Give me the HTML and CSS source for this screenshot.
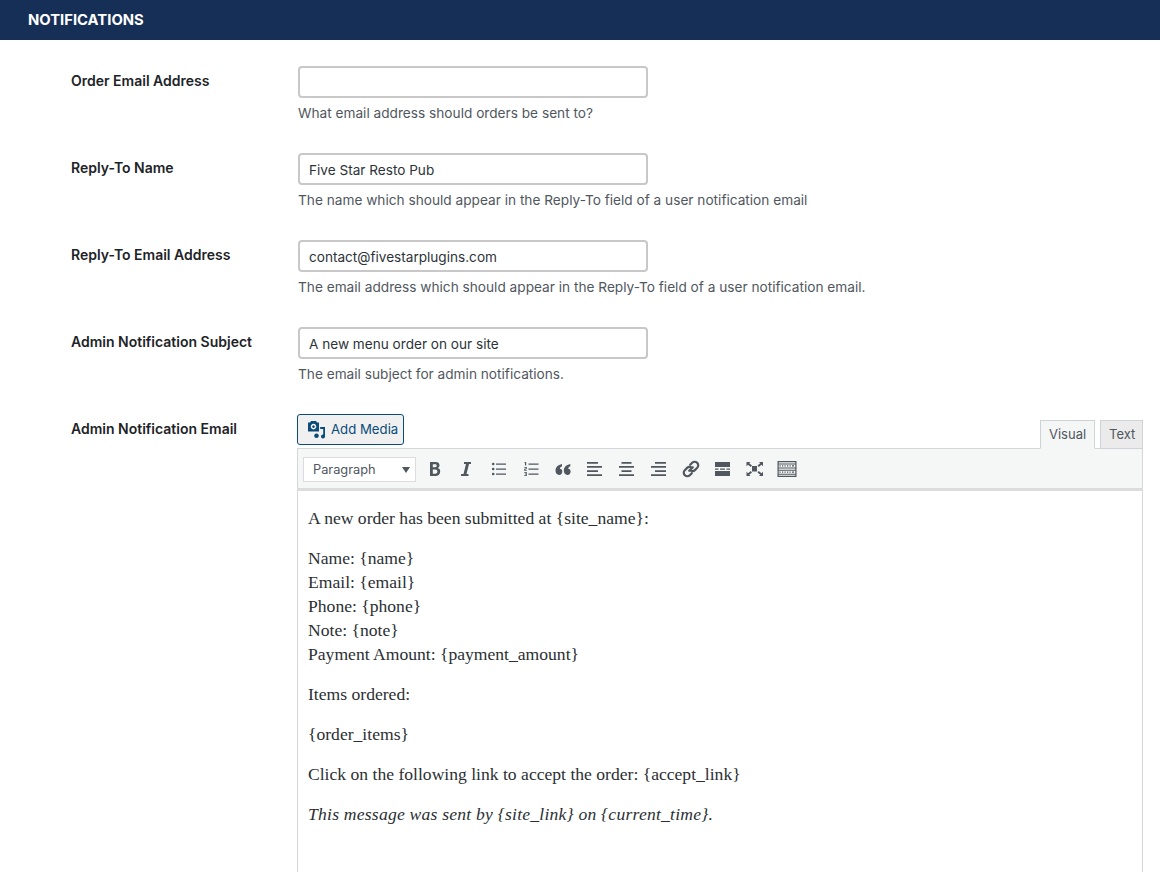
FILE: index.html
```html
<!DOCTYPE html>
<html lang="en">
<head>
<meta charset="utf-8">
<title>Notifications</title>
<link rel="stylesheet" href="styles.css">
</head>
<body>
<h2 class="section-title">Notifications</h2>
<div class="rows">
  <div class="row">
    <div class="label">Order Email Address</div>
    <div class="field">
      <input class="text-input" type="text" value="">
      <p class="desc">What email address should orders be sent to?</p>
    </div>
  </div>
  <div class="row">
    <div class="label">Reply-To Name</div>
    <div class="field">
      <input class="text-input" type="text" value="Five Star Resto Pub">
      <p class="desc">The name which should appear in the Reply-To field of a user notification email</p>
    </div>
  </div>
  <div class="row">
    <div class="label">Reply-To Email Address</div>
    <div class="field">
      <input class="text-input" type="text" value="contact@fivestarplugins.com">
      <p class="desc">The email address which should appear in the Reply-To field of a user notification email.</p>
    </div>
  </div>
  <div class="row">
    <div class="label">Admin Notification Subject</div>
    <div class="field">
      <input class="text-input" type="text" value="A new menu order on our site">
      <p class="desc">The email subject for admin notifications.</p>
    </div>
  </div>
  <div class="row row-editor">
    <div class="label">Admin Notification Email</div>
    <div class="field editor">
      <div class="editor-top">
        <button class="media-btn" type="button">
          <svg class="media-icon" viewBox="0 0 20 20" width="20" height="20"><path d="M1 2.500h2l1-1.500h5l1 1.500h2v9H1zM6.500 3.800a2.800 2.800 0 1 0 .01 0zM6.500 5.300a1.300 1.300 0 1 1-.01 0z" fill-rule="evenodd"/><path d="M18 7v9.500a2 2 0 1 1-1.800-2V9h-3V7zM9.500 13.500a2.300 2.300 0 1 1-.01 0z"/></svg>
          Add Media
        </button>
        <div class="tabs">
          <span class="tab tab-active">Visual</span>
          <span class="tab tab-text">Text</span>
        </div>
      </div>
      <div class="toolbar">
        <div class="format-select">Paragraph<span class="caret"></span></div>
        <span class="tool"><svg viewBox="0 0 20 20"><path fill-rule="evenodd" d="M5 3h5.500c2.700 0 4 1.200 4 3.300 0 1.300-.7 2.300-1.800 2.700 1.500.4 2.500 1.500 2.500 3.300 0 2.900-1.900 4.700-4.800 4.700H5zm2.800 2.300v2.900h2.200c1.100 0 1.700-.5 1.700-1.450s-.6-1.450-1.700-1.450zm0 5.200v4.200h2.500c1.300 0 2.100-.8 2.100-2.100s-.8-2.100-2.100-2.100z"/></svg></span>
        <span class="tool"><svg viewBox="0 0 20 20"><path d="M7 3h7v2h-2L9.500 15h2v2H4v-2h2.500L9 5H7z"/></svg></span>
        <span class="tool"><svg viewBox="0 0 20 20"><circle cx="4.200" cy="5" r="1.300"/><circle cx="4.200" cy="10" r="1.300"/><circle cx="4.200" cy="15" r="1.300"/><path d="M7 4.500h10v1.200H7zM7 9.500h10v1.200H7zM7 14.500h10v1.200H7z"/></svg></span>
        <span class="tool"><svg viewBox="0 0 20 20"><path d="M7.500 4.500h10v1.200h-10zM7.500 9.500h10v1.200h-10zM7.500 14.500h10v1.200h-10zM4 3h1.200v3.500H4V4h-.8zM3.200 8h2.600v2.300H4.400v.7h1.400v.8H3.200V9.700h1.500V8.800H3.200zM3.200 13h2.600v4H3.200v-.7h1.500v-1H3.800v-.6h.9v-1H3.200z"/></svg></span>
        <span class="tool"><svg viewBox="0 0 20 20"><path d="M9 5v2.300c-1.300.6-2 1.500-2.100 2.500 1.400 0 2.400 1 2.400 2.700 0 2-1.200 3.400-3.100 3.400-2.200 0-3.700-1.700-3.700-4.300C2.500 8.300 5 5.800 9 5zM17.300 5v2.300c-1.300.6-2 1.500-2.100 2.500 1.400 0 2.400 1 2.400 2.700 0 2-1.200 3.400-3.100 3.400-2.200 0-3.700-1.700-3.700-4.300 0-3.300 2.500-5.800 6.500-6.600z"/></svg></span>
        <span class="tool"><svg viewBox="0 0 20 20"><path d="M2 3h11v1.700H2zM2 7h15v1.700H2zM2 11.200h11v1.700H2zM2 15.300h15V17H2z"/></svg></span>
        <span class="tool"><svg viewBox="0 0 20 20"><path d="M4.500 3h10v1.700h-10zM2 7h15v1.700H2zM4.500 11.200h10v1.700h-10zM2 15.300h15V17H2z"/></svg></span>
        <span class="tool"><svg viewBox="0 0 20 20"><path d="M6 3h11v1.700H6zM2 7h15v1.700H2zM6 11.200h11v1.700H6zM2 15.300h15V17H2z"/></svg></span>
        <span class="tool"><svg viewBox="0 0 20 20"><path d="M8.200 11.800l3.600-3.600M9.200 5.800l2-2a3.400 3.400 0 0 1 4.900 0l.1.100a3.400 3.400 0 0 1 0 4.900l-2.300 2.300a3.400 3.400 0 0 1-3.900.6M10.800 14.200l-2 2a3.400 3.400 0 0 1-4.900 0l-.1-.1a3.400 3.400 0 0 1 0-4.900l2.300-2.300a3.400 3.400 0 0 1 3.900-.6" fill="none" stroke="currentColor" stroke-width="2.200" stroke-linecap="round"/></svg></span>
        <span class="tool"><svg viewBox="0 0 20 20"><path d="M2 3h15v5H2zM2 12h15v5H2zM2 9.500h3.500v1.200H2zM7 9.500h5v1.200H7zM13.500 9.500H17v1.200h-3.500z"/></svg></span>
        <span class="tool"><svg viewBox="0 0 20 20"><path d="M7 7h5v5.500H7zM1.500 3h4L4.200 4.300 7 6.600 5.800 8 3 5.700 1.500 7.200zM18 3v4.200L16.500 5.700 13.700 8 12.500 6.600 15.300 4.300 14 3zM1.500 17v-4.200L3 14.300 5.800 12 7 13.400 4.200 15.700 5.500 17zM18 17h-4l1.300-1.300L12.500 13.400 13.700 12l2.800 2.300 1.500-1.500z"/></svg></span>
        <span class="tool"><svg viewBox="0 0 20 20"><path fill-rule="evenodd" d="M.5 2h19v16H.5zM1.700 3.200v1.300h16.600V3.200zM1.700 5.500v3h16.600v-3zM1.700 9.500v1.300h16.600V9.500zM1.700 11.800v3h16.600v-3zM1.700 15.800v1h16.600v-1z"/><path d="M2.500 6.300h1.200v1.200H2.500zM5 6.300h1.200v1.200H5zM7.500 6.300h1.200v1.200H7.500zM10 6.300h1.200v1.200H10zM12.500 6.300h1.200v1.200h-1.200zM15 6.300h2v1.200h-2zM2.500 12.600h1.200v1.200H2.500zM5 12.600h1.200v1.200H5zM7.500 12.600h1.200v1.200H7.500zM10 12.600h1.200v1.200H10zM12.500 12.600h1.200v1.200h-1.200zM15 12.600h2v1.200h-2z"/></svg></span>
      </div>
      <div class="content">
        <p>A new order has been submitted at {site_name}:</p>
        <p>Name: {name}<br>Email: {email}<br>Phone: {phone}<br>Note: {note}<br>Payment Amount: {payment_amount}</p>
        <p>Items ordered:</p>
        <p>{order_items}</p>
        <p>Click on the following link to accept the order: {accept_link}</p>
        <p class="signoff">This message was sent by {site_link} on {current_time}.</p>
      </div>
    </div>
  </div>
</div>
</body>
</html>
```
FILE: styles.css
```css
* { box-sizing: border-box; }
html, body { margin: 0; height: 100%; overflow: hidden; }
body {
  background: #fff;
  font-family: Inter, "Liberation Sans", sans-serif;
  font-size: 14px;
  color: #1d2327;
}
.section-title {
  margin: 0;
  height: 40px;
  padding-left: 28px;
  background: #162f57;
  color: #fff;
  font-size: 14.800px;
  font-weight: 700;
  line-height: 40px;
  text-transform: uppercase;
}
.rows { padding-top: 26px; }
.row { display: flex; height: 87px; }
.row-editor { height: auto; }
.label {
  width: 227px;
  margin-left: 71px;
  padding-top: 6px;
  font-weight: 600;
  font-size: 14px;
  line-height: 18px;
  color: #1d2327;
}
.field { flex: 1; }
.text-input {
  display: block;
  width: 350px;
  height: 32px;
  padding: 2px 9px 0;
  border: 2px solid #c8c8c8;
  border-radius: 4px;
  background: #fff;
  font: 13.600px Inter, "Liberation Sans", sans-serif;
  color: #2c3338;
  outline: none;
}
.desc {
  margin: 6px 0 0;
  font-size: 13.660px;
  line-height: 18px;
  color: #50575e;
}
.editor { flex: none; width: 846px; margin-left: -1px; }
.editor-top { display: flex; justify-content: space-between; align-items: flex-end; height: 34px; }
.media-btn {
  display: flex;
  align-items: center;
  gap: 4px;
  width: 107px;
  height: 31px;
  margin-bottom: 3px;
  padding: 0 9px 2px;
  border: 1px solid #0a4b78;
  border-radius: 3px;
  background: #f0f0f1;
  color: #0a4b78;
  font: 400 13.200px Inter, "Liberation Sans", sans-serif;
  white-space: nowrap;
}
.media-icon { fill: #0a4b78; flex: none; margin-top: 2px; }
.tabs { display: flex; gap: 5px; position: relative; top: 1px; }
.tab {
  height: 29px;
  padding: 0 8px;
  border: 1px solid #d0d3d5;
  background: #ebebeb;
  color: #50575e;
  font-size: 13px;
  line-height: 27px;
}
.tab-text { width: 43px; }
.tab-active { width: 55px; background: #f5f6f6; border-bottom-color: #f5f6f6; position: relative; z-index: 1; }
.toolbar {
  display: flex;
  align-items: center;
  height: 43px;
  padding: 1px 0 0 5px;
  border: 1px solid #d4d6d7;
  border-bottom: 3px solid #dcdcde;
  background: #f5f6f6;
}
.format-select {
  position: relative;
  width: 113px;
  height: 25px;
  margin-right: 3px;
  padding-left: 9px;
  border: 1px solid #dcdcde;
  background: #fff;
  color: #50575e;
  font-size: 12.800px;
  line-height: 23px;
}
.caret {
  position: absolute;
  right: 5px;
  top: 9px;
  border: 4.500px solid transparent;
  border-top: 6px solid #50575e;
  border-bottom: 0;
}
.tool { display: flex; justify-content: center; align-items: center; width: 32px; height: 30px; color: #50575e; }
.tool svg { width: 20px; height: 20px; fill: currentColor; }
.content {
  height: 400px;
  padding: 15px 10px;
  border-left: 1px solid #d4d6d7;
  border-right: 1px solid #d4d6d7;
  font-family: "Liberation Serif", serif;
  font-size: 17.600px;
  line-height: 24px;
  color: #2b2f33;
}
.content p { margin: 0 0 16px; }
.content .signoff { font-style: italic; letter-spacing: 0.22px; }
```
